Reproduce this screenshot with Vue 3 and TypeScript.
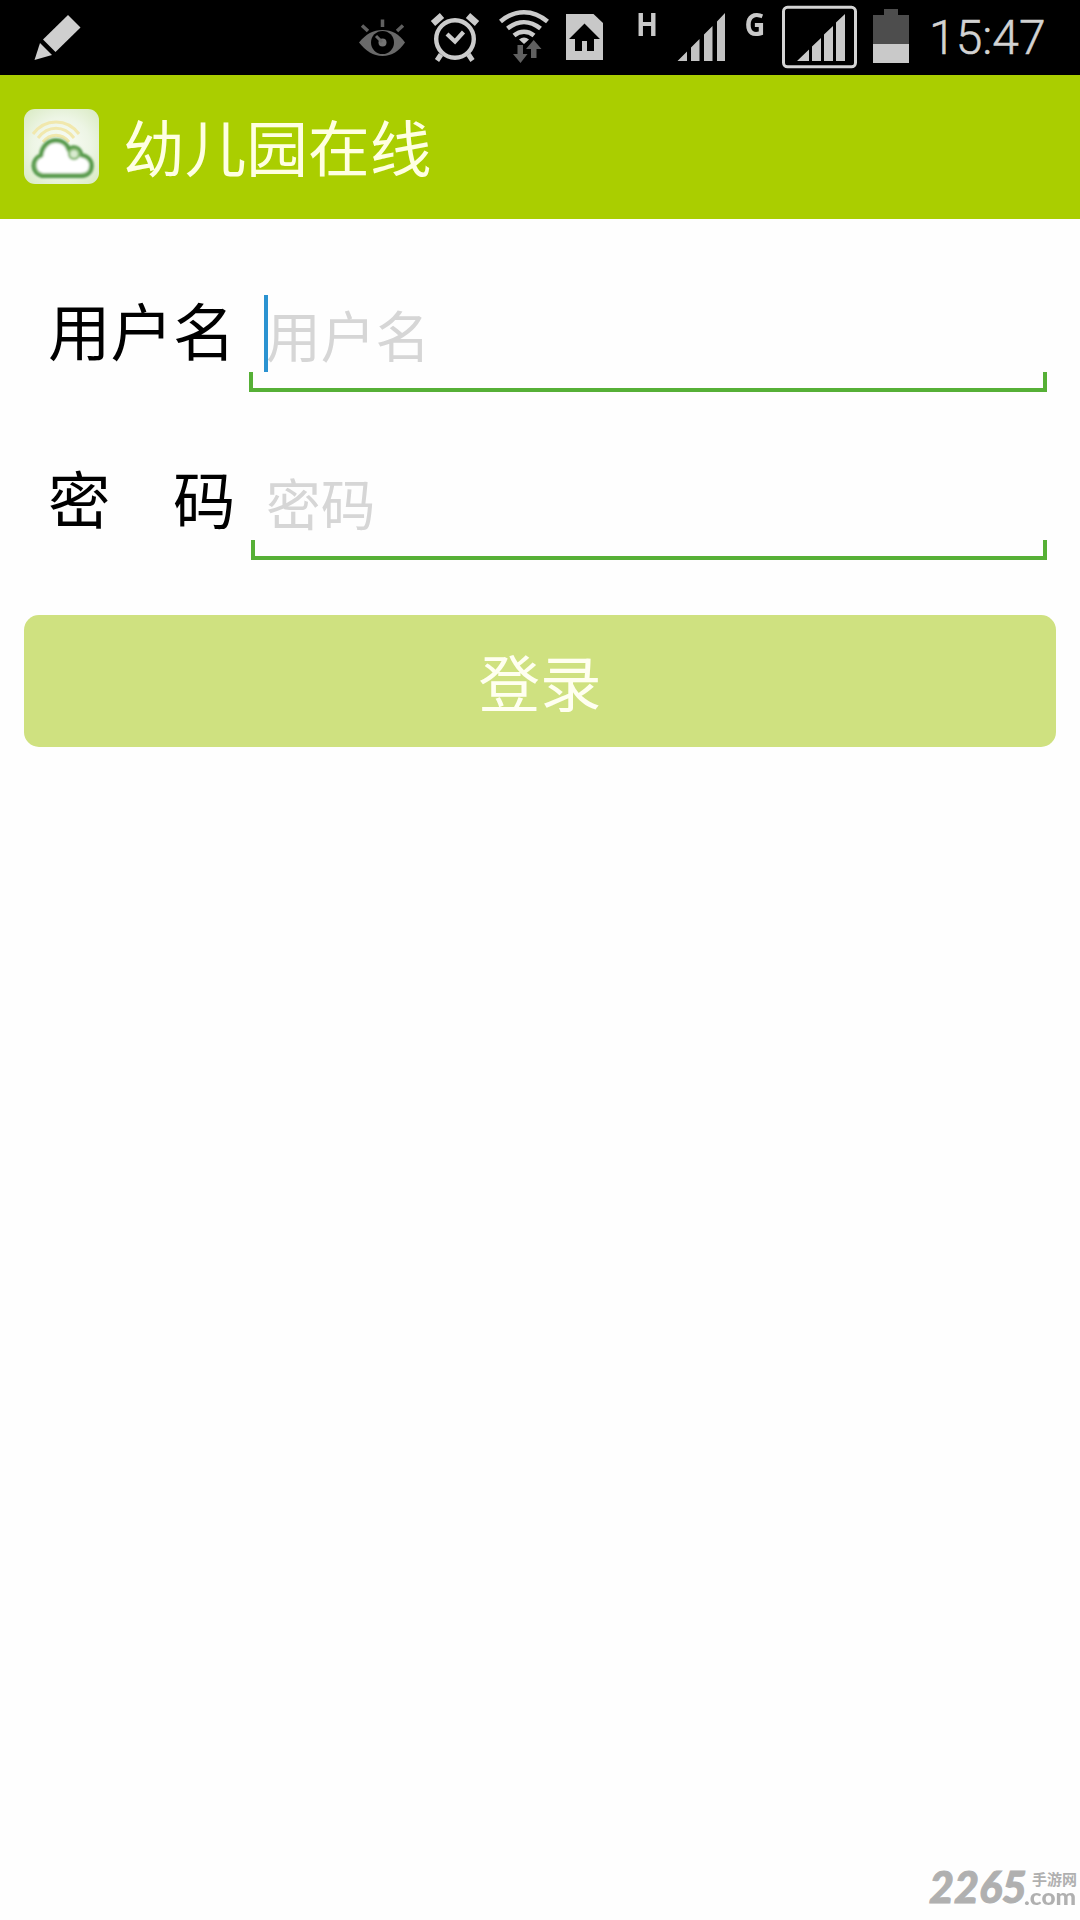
<script setup lang="ts">
import { ref } from 'vue'

interface Field {
  id: string
  label: string
  placeholder: string
  type: string
  active: boolean
}

const fields: Field[] = [
  { id: 'username', label: '用户名', placeholder: '用户名', type: 'text', active: true },
  { id: 'password', label: '密　码', placeholder: '密码', type: 'password', active: false },
]
const values = ref<Record<string, string>>({ username: '', password: '' })
</script>

<template>
  <main class="screen">
    <div class="status">
      <svg class="pencil" width="60" height="75" viewBox="30 0 60 75" fill="#cfcfcf">
        <path d="M68 15 80.500 27.500 55.500 52 43 39.500Z" />
        <path d="M40 43 52 55 34.500 60Z" />
      </svg>
      <div class="tray">
        <svg width="64" height="75" viewBox="354 0 64 75" fill="none">
          <path d="M359 42.500C366 34 373 30 382.500 30S399 34 405 42.500C399 51 392 56 382.500 56S366 51 359 42.500Z" fill="#696969" />
          <circle cx="382.500" cy="42.500" r="11.500" fill="#000" />
          <circle cx="382.500" cy="42.500" r="4" fill="#747474" />
          <path d="M376 36 382 42" stroke="#696969" stroke-width="3" />
          <path d="M382.500 19.500V27M362 25.500 368 31M403 25.500 397 31" stroke="#606060" stroke-width="3.500" />
        </svg>
        <svg width="74" height="75" viewBox="418 0 74 75" fill="none" stroke="#cbcbcb">
          <circle cx="455" cy="39" r="18.800" stroke-width="4.400" />
          <path d="M447 34 455 41.500 463.500 32" stroke-width="4.200" />
          <path d="M441 54.500 437 60.500M468.500 54.500 472.500 60.500" stroke-width="5" />
          <path d="M433 23.500 442 15.500M477 23.500 468 15.500" stroke-width="6.500" />
        </svg>
        <svg width="64" height="75" viewBox="492 0 64 75" fill="none" stroke="#cbcbcb" stroke-width="4.500">
          <path d="M500.500 21.500C515 9 533 9 547.500 21.500M507.500 28.500C518 20 530 20 540.500 28.500M514 35.500C520 30.500 528 30.500 534 35.500" />
          <path d="M519 39.500Q524 35.500 529 39.500L524 44Z" fill="#cbcbcb" stroke="none" />
          <path d="M517.500 45H523V54H527.500L520.500 63 513 54H517.500Z" fill="#606060" stroke="none" />
          <path d="M531 58V49H526L533.700 40 541.500 49H536.500V58Z" fill="#606060" stroke="none" />
        </svg>
        <svg width="76" height="75" viewBox="556 0 76 75">
          <path d="M566 14H593.500L603 23V60H566Z" fill="#c8c8c8" />
          <path d="M584.500 23.500 600 39H594V51H587V41H582V51H575V39H569Z" fill="#000" />
        </svg>
        <span class="net h">H</span>
        <svg width="62" height="75" viewBox="672 0 62 75" fill="#c3c3c3">
          <path d="M677.500 61 687 51.500V61ZM691 47.500 699.500 39V61H691ZM704 34.500 712.500 26V61H704ZM717 21.500 725 13V61H717Z" />
        </svg>
        <span class="net g">G</span>
        <svg width="150" height="75" viewBox="779 0 150 75">
          <rect x="783.500" y="7.300" width="72" height="59.500" rx="4" fill="none" stroke="#d4d4d4" stroke-width="3" />
          <path d="M797 61 809 49.500V61ZM812 46.500 821 38V61H812ZM824 34.500 833 26V61H824ZM836 22.500 845 14V61H836Z" fill="#c9c9c9" />
          <path d="M873 15H884V9H898V15H909V44H873Z" fill="#4d4d4d" />
          <path d="M873 44H909V63H873Z" fill="#c9c9c9" />
        </svg>
        <span class="time">15:47</span>
      </div>
    </div>
    <header class="bar">
      <svg class="logo" width="75" height="75" viewBox="0 0 75 75">
        <defs>
          <radialGradient id="tile" cx=".5" cy=".5" r=".7">
            <stop offset="0" stop-color="#fbfdf8" />
            <stop offset=".55" stop-color="#edf5e5" />
            <stop offset="1" stop-color="#d8eac1" />
          </radialGradient>
          <filter id="glow" x="-10%" y="-10%" width="120%" height="120%">
            <feGaussianBlur stdDeviation=".8" />
          </filter>
        </defs>
        <rect width="75" height="75" rx="11" fill="url(#tile)" />
        <g fill="none" stroke="#f1e8ad" stroke-width="3">
          <path d="M9 25C21 9 43 9 55 25M14 29C24 16 40 16 50 29M19 33C26 24 38 24 45 33" />
        </g>
        <g filter="url(#glow)" stroke-linejoin="round">
          <path d="M18 66.500A10.500 10.500 0 0 1 17 46.500 C18 37 25 31.500 32 31.500 C39 31.500 43.500 36 45 41 C49 36 56 39 57 46 C63 47 67.500 51 67.500 56.500 C67.500 63 63 66.500 57 66.500Z" fill="#fff" stroke="#79b169" stroke-width="5" />
          <path d="M18 67.500A11 11 0 0 1 17 46 C18 36 25 31 32 31 C39 31 44 35 45 40 C50 36 57 39 57.500 45.500 C64 47 68 51 68 56.500 C68 64 63 67.500 57 67.500Z" fill="none" stroke="#4b9344" stroke-width="2.300" />
          <circle cx="50" cy="45" r="5" fill="#d9ebd0" stroke="#87b974" stroke-width="2.500" />
        </g>
      </svg>
      <h1>幼儿园在线</h1>
    </header>
    <form class="form" @submit.prevent>
      <div v-for="f in fields" :key="f.id" class="row">
        <label :for="f.id">{{ f.label }}</label>
        <div class="field" :class="f.id">
          <input :id="f.id" v-model="values[f.id]" :type="f.type" :placeholder="f.placeholder" />
          <i v-if="f.active" class="caret"></i>
        </div>
      </div>
      <button type="submit">登录</button>
    </form>
    <footer class="mark">
      <span class="digits">2265</span>
      <span class="site"><span class="cn">手游网</span><span class="com">.com</span></span>
    </footer>
  </main>
</template>

<style>
body {
  margin: 0;
  background: #fefefe;
}
</style>

<style scoped>
.screen {
  width: 1080px;
  height: 1920px;
  display: flex;
  flex-direction: column;
  overflow: hidden;
  background: #fefefe;
  font-family: "Noto Sans CJK SC", sans-serif;
}
.status {
  height: 75px;
  flex: none;
  display: flex;
  justify-content: space-between;
  padding-left: 30px;
  background: #000;
}
.tray {
  display: flex;
  width: 726px;
}
.tray svg {
  flex: none;
}
.net {
  flex: none;
  font: 700 32px/32px "Noto Sans", sans-serif;
  color: #c9c9c9;
  padding-top: 8px;
  box-sizing: border-box;
  transform: scaleX(.9);
  transform-origin: 14px 0;
}
.h {
  width: 40px;
  padding-left: 3px;
}
.g {
  width: 45px;
  padding-left: 10px;
}
.time {
  font: 300 48px/75px Roboto, sans-serif;
  color: #d2d2d2;
  -webkit-text-stroke: .5px #d2d2d2;
  white-space: nowrap;
}
.bar {
  height: 144px;
  flex: none;
  box-sizing: border-box;
  display: flex;
  align-items: center;
  padding: 0 24px 2px;
  gap: 24px;
  background: #aace00;
}
h1 {
  margin: 0 0 2px;
  font-size: 61.700px;
  line-height: 136px;
  font-weight: 400;
  color: #ffffe2;
}
.form {
  display: flex;
  flex-direction: column;
  padding: 76px 24px 0;
}
.row {
  display: flex;
  height: 97px;
  margin-bottom: 71px;
  padding: 0 9px 0 24px;
}
.row:nth-child(2) {
  margin-bottom: 55px;
}
label {
  width: 201px;
  flex: none;
  font-size: 62.500px;
  line-height: 68px;
  color: #000;
  white-space: nowrap;
}
.field {
  position: relative;
  flex: 1;
  box-sizing: border-box;
  border-bottom: 4px solid #56b036;
}
.password {
  margin-left: 2px;
}
.field::before,
.field::after {
  content: "";
  position: absolute;
  bottom: 0;
  width: 4px;
  height: 16px;
  background: #56b036;
}
.field::before {
  left: 0;
}
.field::after {
  right: 0;
}
input {
  display: block;
  width: 100%;
  height: 78px;
  box-sizing: border-box;
  border: 0;
  outline: 0;
  padding: 0 17px;
  background: none;
  font: 54.700px/78px "Noto Sans CJK SC", sans-serif;
  color: #000;
}
.password input {
  padding-left: 15px;
}
input::placeholder {
  color: #d6d6d6;
  opacity: 1;
}
.caret {
  position: absolute;
  left: 15px;
  top: 0;
  width: 4px;
  height: 77px;
  background: #2b93d1;
}
button {
  height: 132px;
  border: 0;
  border-radius: 15px;
  padding: 0;
  background: #cfe180;
  color: #fffff0;
  font: 61.500px/132px "Noto Sans CJK SC", sans-serif;
}
.mark {
  margin-top: auto;
  display: flex;
  justify-content: flex-end;
  height: 54px;
  color: #b0b0b0;
}
.digits {
  font: italic 900 43px/42px Lato, sans-serif;
  width: 95px;
  white-space: nowrap;
  -webkit-text-stroke: 1px #b0b0b0;
}
.site {
  display: flex;
  flex-direction: column;
  width: 56px;
}
.cn {
  height: 18px;
  font-size: 15px;
  font-weight: 700;
  line-height: 18px;
  padding: 4px 0 0 8px;
  white-space: nowrap;
}
.com {
  font: 900 23px/16px Lato, sans-serif;
  height: 16px;
  transform: scaleX(1.06);
  transform-origin: 0 0;
  white-space: nowrap;
}
</style>
